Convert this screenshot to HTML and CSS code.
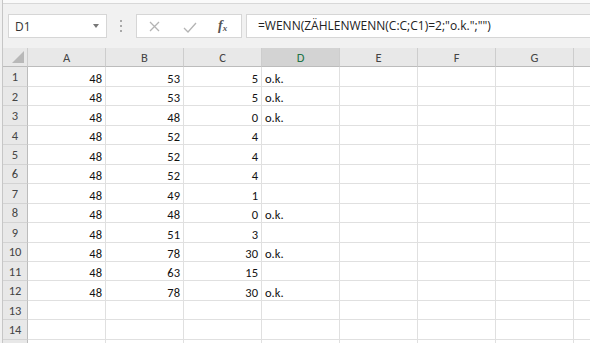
FILE: index.html
```html
<!DOCTYPE html>
<html lang="de">
<head>
  <meta charset="UTF-8">
  <title>Mappe1 - Excel</title>
  <link rel="stylesheet" href="styles.css">
</head>
<body>
  <div class="window">
    <div class="ribbon-edge"></div>

    <div class="formula-bar">
      <div class="name-box">
        <span>D1</span>
        <span class="caret"></span>
      </div>
      <div class="grip"><i></i><i></i><i></i></div>
      <div class="fx-box">
        <svg class="icon-cancel" width="11" height="11" viewBox="0 0 11 11">
          <path d="M1 1 L10 10 M10 1 L1 10" stroke="#b4b4b4" stroke-width="1.3" fill="none"/>
        </svg>
        <svg class="icon-enter" width="14" height="11" viewBox="0 0 14 11">
          <path d="M1 6 L5 10 L13 1" stroke="#b4b4b4" stroke-width="1.3" fill="none"/>
        </svg>
        <span class="fx"><i>f</i><sub>x</sub></span>
      </div>
      <div class="formula-input">=WENN(ZÄHLENWENN(C:C;C1)=2;"o.k.";"")</div>
    </div>

    <div class="grid-wrap">
      <table class="sheet">
        <colgroup>
          <col class="col-rh">
          <col class="col"><col class="col"><col class="col"><col class="col">
          <col class="col"><col class="col"><col class="col"><col class="col">
        </colgroup>
        <tr class="head">
          <th class="corner"><span class="corner-tri"></span></th>
          <th>A</th><th>B</th><th>C</th><th class="active">D</th><th>E</th><th>F</th><th>G</th><th></th>
        </tr>
        <tr><th>1</th><td class="num">48</td><td class="num">53</td><td class="num">5</td><td>o.k.</td><td></td><td></td><td></td><td></td></tr>
        <tr><th>2</th><td class="num">48</td><td class="num">53</td><td class="num">5</td><td>o.k.</td><td></td><td></td><td></td><td></td></tr>
        <tr><th>3</th><td class="num">48</td><td class="num">48</td><td class="num">0</td><td>o.k.</td><td></td><td></td><td></td><td></td></tr>
        <tr><th>4</th><td class="num">48</td><td class="num">52</td><td class="num">4</td><td></td><td></td><td></td><td></td><td></td></tr>
        <tr><th>5</th><td class="num">48</td><td class="num">52</td><td class="num">4</td><td></td><td></td><td></td><td></td><td></td></tr>
        <tr><th>6</th><td class="num">48</td><td class="num">52</td><td class="num">4</td><td></td><td></td><td></td><td></td><td></td></tr>
        <tr><th>7</th><td class="num">48</td><td class="num">49</td><td class="num">1</td><td></td><td></td><td></td><td></td><td></td></tr>
        <tr><th>8</th><td class="num">48</td><td class="num">48</td><td class="num">0</td><td>o.k.</td><td></td><td></td><td></td><td></td></tr>
        <tr><th>9</th><td class="num">48</td><td class="num">51</td><td class="num">3</td><td></td><td></td><td></td><td></td><td></td></tr>
        <tr><th>10</th><td class="num">48</td><td class="num">78</td><td class="num">30</td><td>o.k.</td><td></td><td></td><td></td><td></td></tr>
        <tr><th>11</th><td class="num">48</td><td class="num">63</td><td class="num">15</td><td></td><td></td><td></td><td></td><td></td></tr>
        <tr><th>12</th><td class="num">48</td><td class="num">78</td><td class="num">30</td><td>o.k.</td><td></td><td></td><td></td><td></td></tr>
        <tr><th>13</th><td></td><td></td><td></td><td></td><td></td><td></td><td></td><td></td></tr>
        <tr><th>14</th><td></td><td></td><td></td><td></td><td></td><td></td><td></td><td></td></tr>
        <tr><th></th><td></td><td></td><td></td><td></td><td></td><td></td><td></td><td></td></tr>
      </table>
    </div>
  </div>
</body>
</html>
```

FILE: styles.css
```css
body {
  margin: 0;
  background-color: #f1f1f1;
  font-family: Calibri, Carlito, "Liberation Sans", Arial, sans-serif;
  color: #222;
}

.window {
  margin-left: 2px;
  border-left: 1px solid #c6c6c6;
  height: 343px;
  overflow: hidden;
}

.ribbon-edge {
  height: 3px;
  background-color: #fafafa;
  border-bottom: 1px solid #d8d8d8;
}

/* formula bar */
.formula-bar {
  display: flex;
  align-items: center;
  height: 44px;
  padding-left: 5px;
}

.name-box {
  box-sizing: border-box;
  width: 99px;
  height: 24px;
  border: 1px solid #d6d6d6;
  background-color: #fff;
  display: flex;
  align-items: center;
  justify-content: space-between;
  padding: 0 7px 0 6px;
  font-family: "Open Sans", "Liberation Sans", sans-serif;
  font-size: 12px;
  color: #333;
}

.caret {
  width: 0;
  height: 0;
  border-left: 3.5px solid transparent;
  border-right: 3.5px solid transparent;
  border-top: 4px solid #777;
}

.grip {
  display: flex;
  flex-direction: column;
  gap: 3px;
  margin: 0 14px 0 13px;
}

.grip i {
  display: block;
  width: 2px;
  height: 2px;
  background-color: #a9a9a9;
}

.fx-box {
  box-sizing: border-box;
  width: 106px;
  height: 24px;
  border: 1px solid #d6d6d6;
  background-color: #fff;
  display: flex;
  align-items: center;
  padding-left: 12px;
}

.icon-enter {
  margin-left: 23px;
  margin-top: 2px;
}

.fx {
  margin-left: 21px;
  font-family: "Liberation Serif", serif;
  font-size: 14px;
  color: #555;
  font-weight: bold;
}

.fx sub {
  font-size: 9px;
  font-style: italic;
  vertical-align: -1px;
}

.formula-input {
  box-sizing: border-box;
  flex: 1;
  height: 24px;
  margin-left: 4px;
  border: 1px solid #d6d6d6;
  border-right: none;
  background-color: #fff;
  padding-left: 11px;
  line-height: 22px;
  font-family: "Open Sans", "Liberation Sans", sans-serif;
  font-size: 12px;
  color: #222;
  white-space: nowrap;
}

/* worksheet */
.grid-wrap {
  background-color: #fff;
  overflow: hidden;
}

.sheet {
  border-collapse: separate;
  border-spacing: 0;
  table-layout: fixed;
  width: 649px;
  font-size: 12.5px;
}

.col-rh {
  width: 25px;
}

.col {
  width: 78px;
}

.sheet tr {
  height: 19.46px;
}

.sheet th,
.sheet td {
  box-sizing: border-box;
  height: 19.46px;
  padding: 0 3px;
  overflow: hidden;
  white-space: nowrap;
}

.sheet td {
  border-right: 1px solid #e0e0e0;
  border-bottom: 1px solid #e0e0e0;
  vertical-align: bottom;
  text-align: left;
  color: #111;
}

.sheet td.num {
  text-align: right;
}

.sheet th {
  background-color: #e8e8e8;
  font-weight: normal;
  color: #444;
  text-align: center;
  vertical-align: middle;
}

.head th {
  border-right: 1px solid #cdcdcd;
  border-bottom: 1px solid #bcbcbc;
}

.head th.active {
  background-color: #d3d3d3;
  color: #217346;
}

.sheet tr:not(.head) th {
  border-right: 1px solid #bcbcbc;
  border-bottom: 1px solid #d3d3d3;
  padding: 0;
}

.corner {
  position: relative;
}

.corner-tri {
  position: absolute;
  right: 3px;
  bottom: 3px;
  width: 0;
  height: 0;
  border-left: 12px solid transparent;
  border-bottom: 12px solid #b8b8b8;
}
```
